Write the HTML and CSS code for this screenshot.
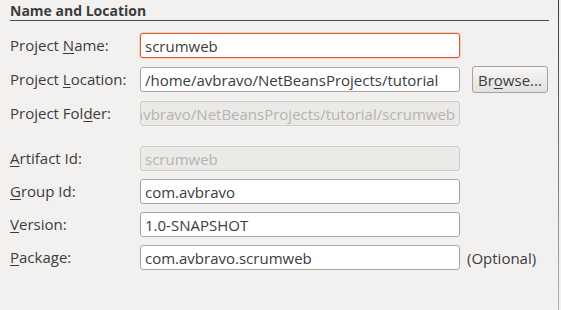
FILE: index.html
```html
<!DOCTYPE html>
<html>
<head>
<meta charset="utf-8">
<link rel="stylesheet" href="styles.css">
</head>
<body>
<div class="panel">
  <div class="title">Name and Location</div>
  <div class="form">
    <div class="label">Project <u>N</u>ame:</div>
    <div class="field focus"><span>scrumweb</span></div>
    <div class="extra"></div>

    <div class="label">Project <u>L</u>ocation:</div>
    <div class="field"><span>/home/avbravo/NetBeansProjects/tutorial</span></div>
    <div class="extra"><div class="button">Br<u>o</u>wse...</div></div>

    <div class="label">Project Fol<u>d</u>er:</div>
    <div class="field disabled end"><span>/home/avbravo/NetBeansProjects/tutorial/scrumweb</span></div>
    <div class="extra"></div>

    <div class="label spaced"><u>A</u>rtifact Id:</div>
    <div class="field disabled spaced"><span>scrumweb</span></div>
    <div class="extra spaced"></div>

    <div class="label"><u>G</u>roup Id:</div>
    <div class="field"><span>com.avbravo</span></div>
    <div class="extra"></div>

    <div class="label"><u>V</u>ersion:</div>
    <div class="field"><span>1.0-SNAPSHOT</span></div>
    <div class="extra"></div>

    <div class="label"><u>P</u>ackage:</div>
    <div class="field"><span>com.avbravo.scrumweb</span></div>
    <div class="extra"><span class="optional">(Optional)</span></div>
  </div>
</div>
</body>
</html>
```
FILE: styles.css
```css
html, body {
  margin: 0;
  padding: 0;
  background: #f2f1f0;
}
body {
  width: 561px;
  height: 310px;
  overflow: hidden;
  font-family: "Open Sans", "DejaVu Sans", sans-serif;
  font-size: 15px;
  color: #3c3c3c;
}
.panel {
  width: 559px;
  height: 310px;
  box-sizing: border-box;
  padding: 2px 0 0 10px;
  border-right: 1px solid #555;
  border-image: linear-gradient(#3a3a3a, #b5b3b0) 1;
  border-top: 0;
  border-left: 0;
  border-bottom: 0;
}
.title {
  width: 539px;
  font-size: 14px;
  font-weight: bold;
  line-height: 17px;
  padding-bottom: 1px;
  border-bottom: 1px solid #4a4a4a;
}
.form {
  margin-top: 12px;
  display: grid;
  grid-template-columns: 130px 320px auto;
  row-gap: 8px;
  align-items: center;
}
.label {
  line-height: 25px;
}
.spaced {
  margin-top: 12px;
}
.field {
  height: 25px;
  box-sizing: border-box;
  background: #fff;
  border: 1px solid #a6a6a6;
  border-radius: 3px;
  padding: 0 4px;
  display: flex;
  align-items: center;
  overflow: hidden;
  white-space: nowrap;
}
.field.focus {
  border-color: #e2582c;
  box-shadow: 0 0 0 1px rgba(240, 150, 110, 0.35);
}
.field.disabled {
  background: #ebeae8;
  border-color: #cfcdca;
  color: #b5b3b0;
}
.field.end {
  justify-content: flex-end;
}
.extra {
  display: flex;
  align-items: center;
}
.button {
  margin-left: 12px;
  height: 27px;
  box-sizing: border-box;
  padding: 0 5px;
  display: flex;
  align-items: center;
  border: 1px solid #a3a3a3;
  border-radius: 3px;
  background: linear-gradient(#f7f6f5, #e2e1df);
}
.optional {
  margin-left: 7px;
}
u {
  text-decoration-thickness: 1px;
  text-underline-offset: 2px;
}
```
